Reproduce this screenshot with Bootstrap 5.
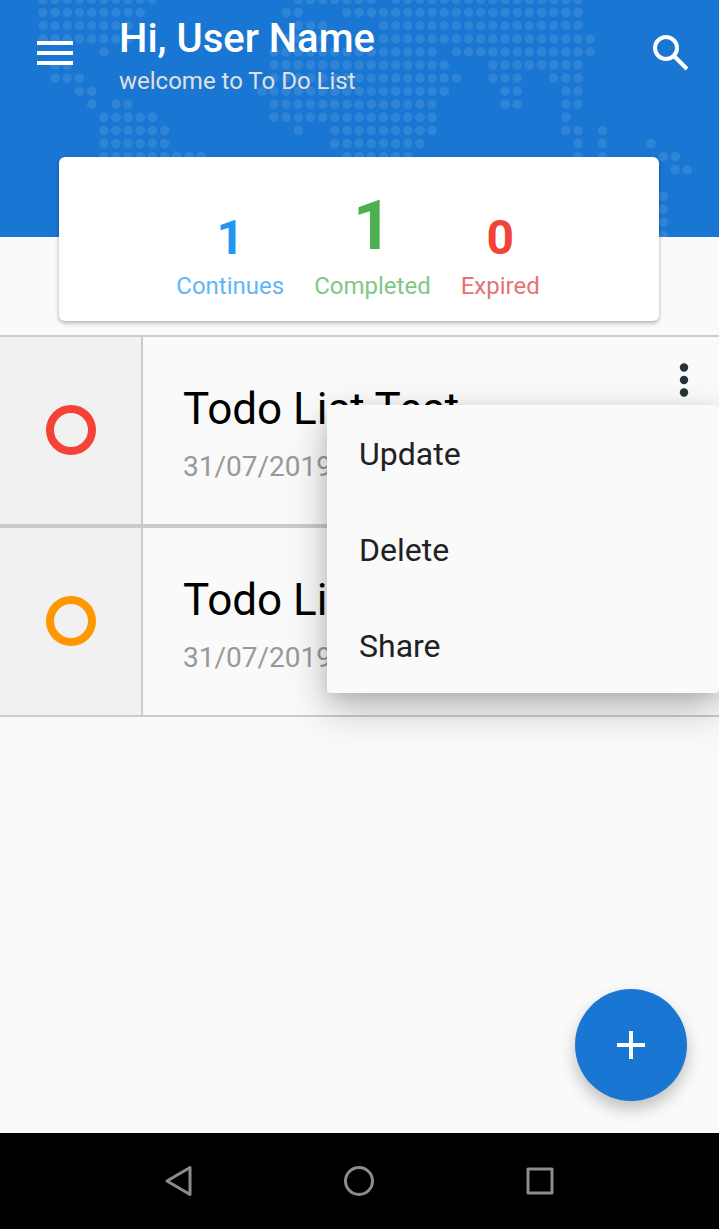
<!DOCTYPE html>
<html lang="en">
<head>
<meta charset="utf-8">
<meta name="viewport" content="width=device-width, initial-scale=1">
<title>To Do List</title>
<link href="https://cdn.jsdelivr.net/npm/bootstrap@5.3.0/dist/css/bootstrap.min.css" rel="stylesheet">
<style>
  body { background: #fafafa; font-family: Roboto, "Liberation Sans", sans-serif; color: #000; }
  .app-header { background: #1976d2; height: 237px; }
  .world-dots { top: 0; left: 0; }
  .app-bar { padding: 16px 24px 0 30px; }
  .icon-btn { width: 50px; height: 50px; border: 0; background: none; padding: 0; }
  .menu-btn { margin-top: 12px; }
  .search-btn { margin-top: 12px; margin-right: -1px; }
  .greeting { padding-left: 39px; }
  .greeting h1 { font-size: 40px; line-height: 46px; font-weight: 500; color: #fff; }
  .greeting p { font-size: 24px; line-height: 38px; color: #e0e0e0; }
  .stats-card { margin: -80px 60px 14px 59px; height: 164px; border-radius: 6px; gap: 30px; padding: 0 2px 19px 0; box-shadow: 0 2px 4px rgba(0,0,0,.3); }
  .stat-value { font-weight: 700; font-size: 48px; line-height: 64px; }
  .stat-value-main { font-size: 68px; line-height: 88px; }
  .stat-label { font-size: 24px; line-height: 32px; }
  .tone-blue { color: #2196f3; } .tone-blue + .stat-label { color: #64b5f6; }
  .tone-green { color: #4caf50; } .tone-green + .stat-label { color: #81c784; }
  .tone-red { color: #f44336; } .tone-red + .stat-label { color: #e57373; }
  .todo-item { height: 191px; border: 2px solid #cbcbcb; border-width: 2px 0; }
  .todo-status { width: 143px; padding-bottom: 1px; border-right: 2px solid #cbcbcb; background: #f1f1f1; }
  .todo-status input { appearance: none; width: 50px; height: 50px; border: 8px solid; border-radius: 50%; margin: 0; }
  .ring-red { color: #f44336; } .ring-orange { color: #ff9800; }
  .todo-text { padding: 42px 0 0 40px; }
  .todo-text h2 { font-size: 44px; line-height: 60px; font-weight: 400; }
  .todo-text p { font-size: 28px; line-height: 56px; color: #999; }
  .more-btn { top: 18px; right: 10px; }
  .item-menu { top: 68px; right: 0; width: 392px; border: 0; border-radius: 4px; background: #fafafa; box-shadow: 0 16px 40px rgba(0,0,0,.26), 0 4px 16px rgba(0,0,0,.1); }
  .item-menu .dropdown-item { font-size: 32px; line-height: 48px; padding: 25px 32px 23px; color: #212121; }
  .fab-row { padding: 0 32px 32px; }
  .fab { width: 112px; height: 112px; background: #1976d2; border: 0; box-shadow: 0 8px 16px rgba(0,0,0,.24); }
  .system-bar { height: 96px; background: #000; padding: 0 89px; }
</style>
</head>
<body>
<div class="min-vh-100 d-flex flex-column overflow-hidden">
  <header class="app-header position-relative overflow-hidden">
    <svg class="world-dots position-absolute" id="worldDots" width="719" height="237" fill="#fff" fill-opacity=".1" aria-hidden="true"></svg>
    <div class="app-bar position-relative d-flex align-items-start">
      <button class="icon-btn menu-btn flex-shrink-0" type="button" aria-label="Open menu">
        <svg class="d-block" width="50" height="50" fill="#fff"><path d="M7 13h36v4H7zM7 23h36v4H7zM7 33h36v4H7z"/></svg>
      </button>
      <div class="greeting flex-grow-1">
        <h1 class="m-0">Hi, User Name</h1>
        <p class="m-0">welcome to To Do List</p>
      </div>
      <button class="icon-btn search-btn flex-shrink-0" type="button" aria-label="Search">
        <svg class="d-block" width="50" height="50" fill="none" stroke="#fff" stroke-width="4"><circle cx="20" cy="20" r="11"/><path d="M28 28L41 41"/></svg>
      </button>
    </div>
  </header>

  <main class="flex-grow-1 d-flex flex-column">
    <section class="stats-card position-relative bg-white d-flex justify-content-center align-items-end text-center">
      <div><div class="stat-value tone-blue">1</div><div class="stat-label">Continues</div></div>
      <div><div class="stat-value stat-value-main tone-green">1</div><div class="stat-label">Completed</div></div>
      <div><div class="stat-value tone-red">0</div><div class="stat-label">Expired</div></div>
    </section>

    <ul class="list-unstyled m-0">
      <li class="todo-item d-flex position-relative">
        <div class="todo-status d-flex align-items-center justify-content-center"><input class="ring-red" type="checkbox" aria-label="Mark first task complete"></div>
        <div class="todo-text"><h2 class="m-0">Todo List Test</h2><p class="m-0">31/07/2019</p></div>
        <button class="icon-btn more-btn position-absolute" type="button" aria-label="Task options" aria-expanded="true">
          <svg class="d-block" width="50" height="50" fill="#263238"><circle cx="25" cy="12.500" r="4.200"/><circle cx="25" cy="25" r="4.200"/><circle cx="25" cy="37.500" r="4.200"/></svg>
        </button>
        <div class="item-menu dropdown-menu show m-0 p-0">
          <button class="dropdown-item" type="button">Update</button>
          <button class="dropdown-item" type="button">Delete</button>
          <button class="dropdown-item" type="button">Share</button>
        </div>
      </li>
      <li class="todo-item d-flex">
        <div class="todo-status d-flex align-items-center justify-content-center"><input class="ring-orange" type="checkbox" aria-label="Mark second task complete"></div>
        <div class="todo-text"><h2 class="m-0">Todo List Test</h2><p class="m-0">31/07/2019</p></div>
      </li>
    </ul>

    <div class="fab-row mt-auto d-flex justify-content-end">
      <button class="fab rounded-circle d-flex align-items-center justify-content-center" type="button" aria-label="Add task">
        <svg width="28" height="28" fill="#fff"><path d="M12 0h4v12h12v4H16v12h-4V16H0v-4h12z"/></svg>
      </button>
    </div>
  </main>

  <nav class="system-bar d-flex justify-content-around align-items-center" aria-label="System">
    <button class="icon-btn" type="button" aria-label="Back"><svg class="d-block mx-auto" width="50" height="50" fill="none" stroke="#8c8c8c" stroke-width="3" stroke-linejoin="round"><path d="M36 11.500V38.500L13 25z"/></svg></button>
    <button class="icon-btn" type="button" aria-label="Home"><svg class="d-block mx-auto" width="50" height="50" fill="none" stroke="#8c8c8c" stroke-width="3"><circle cx="25" cy="25" r="13.500"/></svg></button>
    <button class="icon-btn" type="button" aria-label="Recent apps"><svg class="d-block mx-auto" width="50" height="50" fill="none" stroke="#8c8c8c" stroke-width="3" stroke-linejoin="round"><path d="M13 13h24v24H13z"/></svg></button>
  </nav>
</div>
<script src="https://cdn.jsdelivr.net/npm/bootstrap@5.3.0/dist/js/bootstrap.bundle.min.js"></script>
<script>
  // Each row lists inclusive column ranges of the dotted world map.
  const rows = [
    [[0,9],[21,27],[29,44]],
    [[0,8],[20,21],[25,44]],
    [[0,7],[21,23],[28,44]],
    [[0,7],[20,23],[28,45]],
    [[5,5],[19,32],[34,45]],
    [[1,2],[19,33],[37,44]],
    [[1,3],[19,34],[37,39],[42,44]],
    [[3,4],[18,33],[38,39],[43,44]],
    [[4,4],[6,7],[19,32],[38,39],[43,44]],
    [[5,9],[19,32],[43,43]],
    [[5,10],[21,21],[24,32],[43,44],[46,46]],
    [[5,10],[24,31],[44,44],[46,46],[50,50]],
    [[5,13],[25,30],[44,44],[46,46],[51,52]],
    [[52,53]], [], [[51,51]], [[51,51]], [[51,51]], [[51,51]]
  ];
  const map = document.getElementById('worldDots');
  rows.forEach((ranges, r) => ranges.forEach(([from, to]) => {
    for (let c = from; c <= to; c++) {
      const dot = document.createElementNS('http://www.w3.org/2000/svg', 'circle');
      dot.setAttribute('cx', 43 + c * 12.16);
      dot.setAttribute('cy', -0.5 + r * 13.1);
      dot.setAttribute('r', 4.8);
      map.append(dot);
    }
  }));
</script>
</body>
</html>
